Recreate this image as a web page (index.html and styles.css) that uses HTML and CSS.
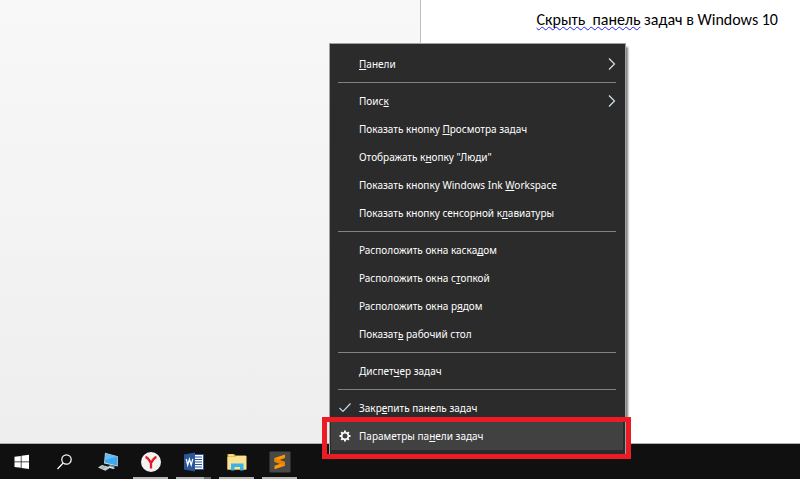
FILE: index.html
```
<!DOCTYPE html>
<html lang="ru">
<head>
  <meta charset="utf-8">
  <title>Windows 10</title>
  <link rel="stylesheet" href="styles.css">
</head>
<body>
  <main class="workspace">
    <div class="margin"></div>
    <div class="document">
      <p><span class="grammar">Скрыть&nbsp; панель</span> задач в Windows 10</p>
    </div>
  </main>

  <nav class="taskbar">
    <button class="task" aria-label="Пуск">
      <svg width="16" height="16" viewBox="0 0 16 16" fill="#fff"><path d="M.5 2.800 6.800 1.900V7.500H.5zM7.500 1.800 15 .7V7.500H7.500zM.5 8.200H6.800V13.800L.5 12.900zM7.500 8.200H15V15L7.500 13.900z"/></svg>
    </button>
    <button class="task" aria-label="Поиск">
      <svg width="16" height="16" viewBox="0 0 16 16" fill="none" stroke="#fff" stroke-width="1.2"><circle cx="9.500" cy="5.500" r="4.700"/><path d="M6.200 9 .5 15"/></svg>
    </button>
    <button class="task" aria-label="Компьютер">
      <svg width="22" height="20" viewBox="0 0 22 20"><path d="M8 .8 20.800 4.200V14.600L7 11.400z" fill="#b9d8ea"/><path d="M8.700 1.800 20 4.800V13.600L8 10.600z" fill="#3fa9ee"/><path d="M8.700 1.800 20 4.800 8.200 8z" fill="#65bff6"/><path d="M13 12.800 11.500 14.800 16 16.300 18 14z" fill="#78909c"/><path d="M10 15 12.500 14.300 18.500 15.900 16 17z" fill="#dce5ea"/><path d="M5 13 13.500 15.600 8.500 18.800 1 15.600z" fill="#d9e2e7"/><path d="M4 14.200 11.500 16.500M2.600 15.200 10 17.600M8.500 13.800 4.500 17" stroke="#8298a5" stroke-width=".6"/></svg>
    </button>
    <button class="task running" aria-label="Яндекс.Браузер">
      <svg width="22" height="22" viewBox="0 0 22 22"><circle cx="11" cy="11" r="10" fill="#f3f3f3"/><path d="M5.500 6Q8 6.500 11 12.200Q14 6.500 16.500 6M11 11.500V17.500" fill="none" stroke="#e31b23" stroke-width="2.300"/></svg>
    </button>
    <button class="task running stacked" aria-label="Word">
      <svg width="22" height="20" viewBox="0 0 22 20"><path d="M10 2.500H20.500V17.500H10z" fill="#fff" stroke="#2b579a"/><path d="M12 5H19M12 7.500H19M12 10H19M12 12.500H19M12 15H19" stroke="#2b579a" stroke-width="1.200"/><path d="M1 2.500 12 .5V19.500L1 17.500z" fill="#2b579a"/><path d="M3.200 7 4.700 13 6.400 7.300 8.200 13 9.800 6.800" fill="none" stroke="#fff" stroke-width="1.300"/></svg>
    </button>
    <button class="task running" aria-label="Проводник">
      <svg width="20" height="18" viewBox="0 0 20 18"><path d="M.5 1H7L8.500 2.500H19V16.500H.5z" fill="#e8bd4e"/><path d="M.5 4H8L9.500 3H19.500V16.500H.5z" fill="#fbe193"/><path d="M2 2.300H6" stroke="#fff2c4"/><path d="M4 10.500H16.500V17.500H13V14H7.500V17.500H4z" fill="#36b4ea"/></svg>
    </button>
    <button class="task running" aria-label="Sublime Text">
      <svg width="22" height="22" viewBox="0 0 22 22"><rect x=".5" y=".5" width="21" height="21" rx="1" fill="#484848"/><path d="M5.500 7 16 3.500V7L10 9 16 11V14.700L5.500 18.200V14.700L11.500 12.700 5.500 10.700z" fill="#ff9800"/><path d="M5.500 7V10.700L16 14.700V11z" fill="#e98300"/></svg>
    </button>
  </nav>

  <div class="menu" role="menu">
    <button class="item" role="menuitem"><span><u>П</u>анели</span><svg class="arrow" viewBox="0 0 8 12"><path d="M1 .5 6.500 6 1 11.500"/></svg></button>
    <hr>
    <button class="item" role="menuitem"><span>Поис<u>к</u></span><svg class="arrow" viewBox="0 0 8 12"><path d="M1 .5 6.500 6 1 11.500"/></svg></button>
    <button class="item" role="menuitem"><span>Показать кнопку <u>П</u>росмотра задач</span></button>
    <button class="item" role="menuitem"><span>Отображать к<u>н</u>опку "Люди"</span></button>
    <button class="item" role="menuitem"><span>Показать кнопку Windows Ink <u>W</u>orkspace</span></button>
    <button class="item" role="menuitem"><span>Показать кнопку сенсорной к<u>л</u>авиатуры</span></button>
    <hr>
    <button class="item" role="menuitem"><span>Расположить окна каска<u>д</u>ом</span></button>
    <button class="item" role="menuitem"><span>Расположить окна с<u>т</u>опкой</span></button>
    <button class="item" role="menuitem"><span>Расположить окна р<u>я</u>дом</span></button>
    <button class="item" role="menuitem"><span>Показат<u>ь</u> рабочий стол</span></button>
    <hr>
    <button class="item" role="menuitem"><span>Диспет<u>ч</u>ер задач</span></button>
    <hr>
    <button class="item" role="menuitemcheckbox" aria-checked="true"><svg class="icon" viewBox="0 0 14 14"><path d="M1.500 7 5 10.500 12.500 2.500" fill="none" stroke="#c5d8e8" stroke-width="1.200"/></svg><span>Закр<u>е</u>пить панель задач</span></button>
    <button class="item selected" role="menuitem"><svg class="icon" viewBox="0 0 14 14"><circle cx="7" cy="7" r="3.300" fill="none" stroke="#fff" stroke-width="1.600"/><path d="M7 1.500V3.500M7 10.500V12.500M1.500 7H3.500M10.500 7H12.500M3.200 3.200 4.600 4.600M9.400 9.400 10.800 10.800M10.800 3.200 9.400 4.600M4.600 9.400 3.200 10.800" stroke="#fff" stroke-width="1.900"/></svg><span>Параметры па<u>н</u>ели задач</span></button>
    <div class="highlight"></div>
  </div>
</body>
</html>
```
FILE: styles.css
```
* {
  box-sizing: border-box;
}
body {
  margin: 0;
  height: 100vh;
  display: flex;
  flex-direction: column;
  position: relative;
  overflow: hidden;
  font-family: "Noto Sans", "Open Sans", sans-serif;
}
.workspace {
  flex: 1;
  display: grid;
  grid-template-columns: 10fr 9fr;
  background-color: #fff;
  border-bottom: 1px solid #b0b0b0;
}
.margin {
  background: linear-gradient(#f8f8f8, #eeeeee);
  border-right: 1px solid #c0c0c0;
}
.document {
  padding: 8px 22px;
  text-align: right;
}
.document p {
  margin: 0;
  font-family: Carlito, Lato, "Noto Sans", sans-serif;
  font-size: 16px;
  line-height: 24px;
  color: #000;
}
.grammar {
  text-decoration: underline wavy #2020ff 1px;
  text-underline-offset: 1px;
  text-decoration-skip-ink: none;
}

.taskbar {
  height: 35px;
  display: flex;
  background-color: #101010;
}
.task {
  width: 43px;
  padding: 0;
  border: 0;
  background: none;
  display: flex;
  align-items: center;
  justify-content: center;
}
.task svg {
  flex: none;
}
.running {
  background: linear-gradient(#b5b5b5, #b5b5b5) center bottom / 35px 2px no-repeat;
}
.stacked {
  background-image: linear-gradient(90deg, #b5b5b5 28px, #707070 28px);
}

.menu {
  position: absolute;
  left: 329px;
  bottom: 24px;
  width: 297px;
  padding: 6px 2px 4px 1px;
  background-color: #2b2b2b;
  border: 1px solid #a0a0a0;
  box-shadow: 3px 3px 2px -1px rgba(0, 0, 0, 0.5);
}
.menu hr {
  height: 1px;
  margin: 4px 7px;
  border: 0;
  background-color: #808080;
}
.item {
  width: 100%;
  height: 28px;
  padding: 0 7px 0 28px;
  border: 0;
  background: none;
  display: flex;
  align-items: center;
  color: #fff;
  font-family: inherit;
  font-size: 10px;
  font-weight: 400;
  line-height: 16px;
}
.item u {
  text-underline-offset: 1px;
  text-decoration-skip-ink: none;
}
.selected {
  background-color: #414141;
}
.icon {
  width: 14px;
  height: 14px;
  margin-left: -21px;
  margin-right: 7px;
}
.arrow {
  width: 8px;
  height: 12px;
  margin-left: auto;
  fill: none;
  stroke: #d5e3ea;
  stroke-width: 1.2;
}
.highlight {
  position: absolute;
  left: -8px;
  right: -6px;
  bottom: -5px;
  height: 42px;
  border: 5px solid #ed1c24;
}
```
